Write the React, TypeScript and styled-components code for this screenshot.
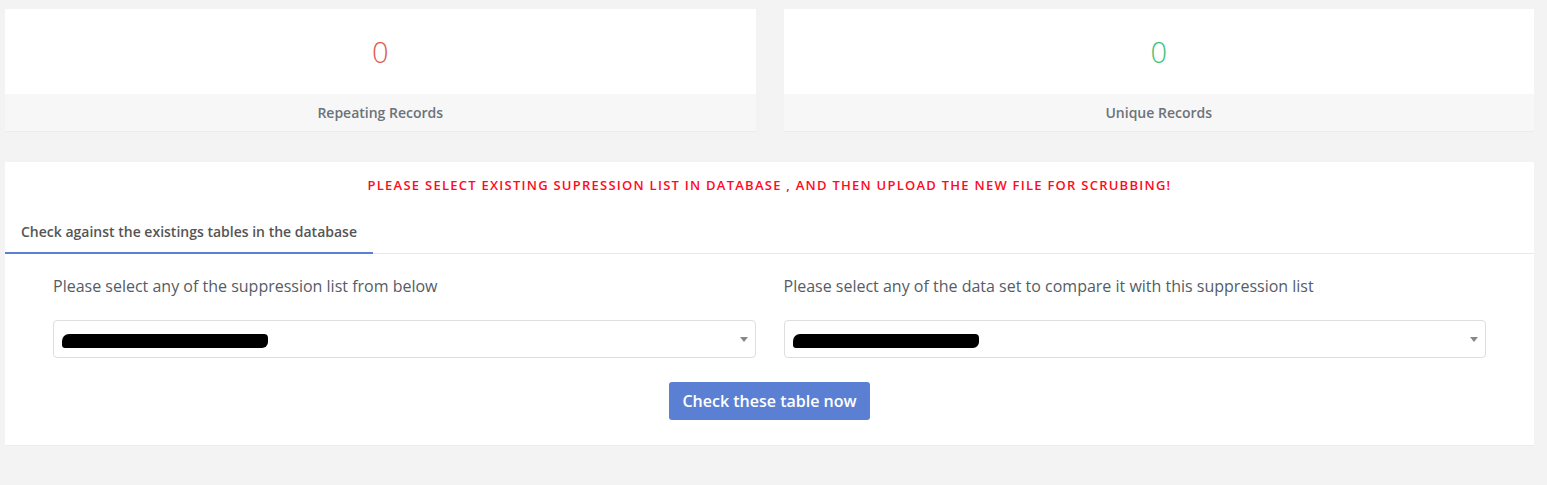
import React from "react";
import styled, { createGlobalStyle } from "styled-components";

const GlobalStyle = createGlobalStyle`
  html, body {
    margin: 0;
    padding: 0;
    background: #f3f3f3;
    font-family: "Open Sans", "Liberation Sans", sans-serif;
    color: #555;
  }
  * { box-sizing: border-box; }
`;

const Page = styled.div`
  padding: 9px 13px 40px 5px;
  display: flex;
  flex-direction: column;
  gap: 30px;
`;

const StatRow = styled.div`
  display: grid;
  grid-template-columns: 1fr 1fr;
  gap: 28px;
`;

const StatCard = styled.div`
  background: #fff;
  border-bottom: 1px solid #ececec;
  display: flex;
  flex-direction: column;
`;

const StatValue = styled.div<{ $tone: "red" | "green" }>`
  height: 85px;
  display: flex;
  align-items: center;
  justify-content: center;
  font-size: 29px;
  font-weight: 300;
  color: ${(p) => (p.$tone === "red" ? "#dc5d50" : "#3cc47c")};
`;

const StatLabel = styled.div`
  height: 37px;
  background: #f7f7f7;
  display: flex;
  align-items: center;
  justify-content: center;
  font-size: 14px;
  font-weight: 600;
  color: #6c727a;
`;

const Panel = styled.div`
  background: #fff;
  border-bottom: 1px solid #ececec;
  padding-bottom: 25px;
`;

const Notice = styled.div`
  text-align: center;
  color: #ff0a1e;
  font-size: 13px;
  font-weight: 600;
  letter-spacing: 1.25px;
  padding-top: 14px;
  height: 47px;
`;

const Tabs = styled.div`
  display: flex;
  border-bottom: 1px solid #e8e8e8;
`;

const Tab = styled.div<{ $active?: boolean }>`
  padding: 13px 16px 11px 16px;
  font-size: 14px;
  line-height: 19px;
  font-weight: 600;
  color: #555;
  border-bottom: 2px solid ${(p) => (p.$active ? "#5b7fd2" : "transparent")};
  margin-bottom: -1px;
`;

const Fields = styled.div`
  display: grid;
  grid-template-columns: 1fr 1fr;
  gap: 28px;
  padding: 21px 48px 0 48px;
`;

const Field = styled.div`
  display: flex;
  flex-direction: column;
`;

const Label = styled.label`
  font-size: 16px;
  color: #555c66;
  line-height: 22px;
  margin-bottom: 23px;
`;

const Select = styled.div`
  position: relative;
  height: 38px;
  border: 1px solid #dedede;
  border-radius: 4px;
  background: #fff;
  display: flex;
  align-items: center;
  padding: 0 12px 0 8px;
`;

const Redaction = styled.span<{ $w: number }>`
  display: block;
  width: ${(p) => p.$w}px;
  height: 14px;
  background: #000;
  border-radius: 7px 4px 6px 3px;
  margin-top: 3px;
`;

const Caret = styled.span`
  position: absolute;
  right: 7px;
  top: 50%;
  margin-top: -2px;
  width: 0;
  height: 0;
  border-left: 4px solid transparent;
  border-right: 4px solid transparent;
  border-top: 5px solid #888;
`;

const Actions = styled.div`
  display: flex;
  justify-content: center;
  padding-top: 24px;
`;

const Button = styled.button`
  width: 201px;
  height: 38px;
  background: #5b80d3;
  color: #fff;
  border: none;
  border-radius: 3px;
  font-family: "Open Sans", "Liberation Sans", sans-serif;
  font-size: 16px;
  font-weight: 600;
  cursor: pointer;
`;

export default function App() {
  return (
    <>
      <GlobalStyle />
      <Page>
        <StatRow>
          <StatCard>
            <StatValue $tone="red">0</StatValue>
            <StatLabel>Repeating Records</StatLabel>
          </StatCard>
          <StatCard>
            <StatValue $tone="green">0</StatValue>
            <StatLabel>Unique Records</StatLabel>
          </StatCard>
        </StatRow>
        <Panel>
          <Notice>
            PLEASE SELECT EXISTING SUPRESSION LIST IN DATABASE , AND THEN UPLOAD THE NEW FILE FOR SCRUBBING!
          </Notice>
          <Tabs>
            <Tab $active>Check against the existings tables in the database</Tab>
          </Tabs>
          <Fields>
            <Field>
              <Label>Please select any of the suppression list from below</Label>
              <Select>
                <Redaction $w={206} />
                <Caret />
              </Select>
            </Field>
            <Field>
              <Label>Please select any of the data set to compare it with this suppression list</Label>
              <Select>
                <Redaction $w={186} />
                <Caret />
              </Select>
            </Field>
          </Fields>
          <Actions>
            <Button>Check these table now</Button>
          </Actions>
        </Panel>
      </Page>
    </>
  );
}
